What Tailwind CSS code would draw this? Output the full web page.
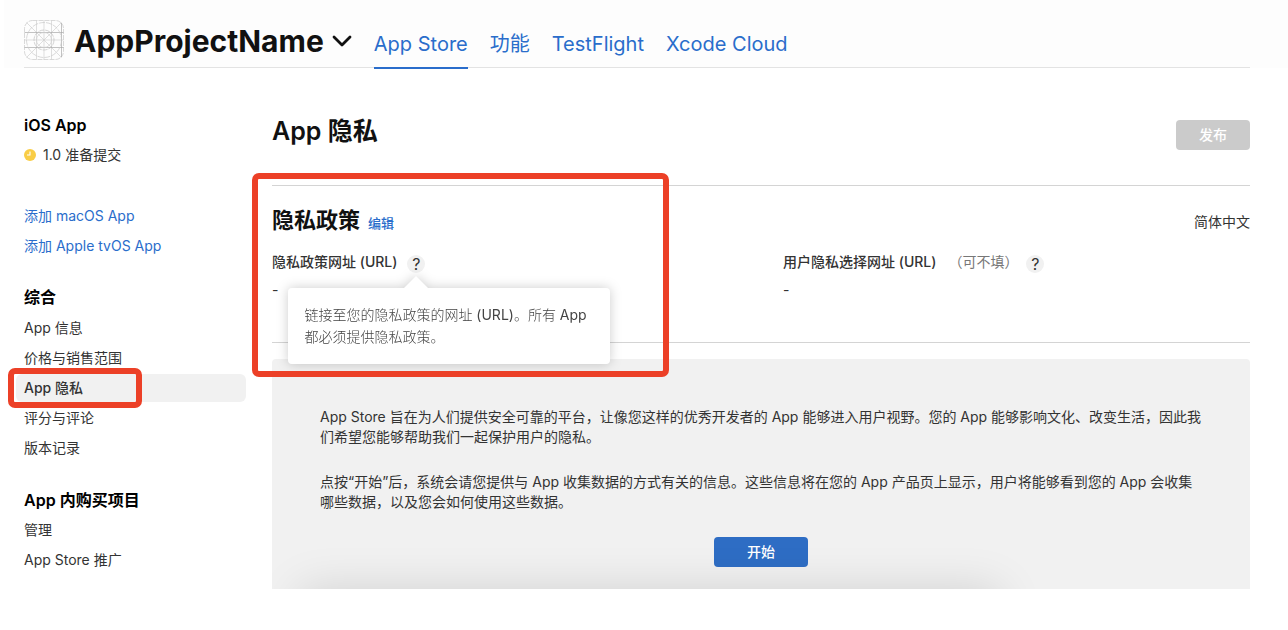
<!DOCTYPE html>
<html lang="zh-CN">
<head>
<meta charset="utf-8">
<title>App 隐私</title>
<script src="https://cdn.jsdelivr.net/npm/@tailwindcss/browser@4"></script>
</head>
<body class="bg-white font-['Inter','Noto_Sans_CJK_SC',sans-serif] text-sm text-[#333]">
<header class="ml-1 h-[68px] bg-[#fdfdfd] pl-5 pr-[38px]">
  <div class="flex h-full items-stretch border-b border-[#e3e3e3]">
    <div class="flex items-center pt-3">
      <svg class="size-10 shrink-0" viewBox="0 0 40 40" fill="none" stroke="#c0c0c0" stroke-width="0.7" aria-hidden="true">
        <rect x="0.5" y="0.5" width="39" height="39" rx="8" stroke="#c8c8c8" stroke-dasharray="5 1"/>
        <path d="M2.5 2.5l35 35M37.5 2.5l-35 35M12.5 0.5v39M20 0.5v39M27.5 0.5v39M0.5 20h39" stroke="#d0d0d0"/>
        <path d="M37.5 3v34M0.5 12.5h39M0.5 27.5h39" stroke="#a8a8a8"/>
        <circle cx="20" cy="20" r="17.5" stroke="#c8c8c8" stroke-dasharray="6 1"/>
        <circle cx="20" cy="20" r="10" stroke-dasharray="5 1"/>
        <circle cx="20" cy="20" r="7.5" stroke="#d0d0d0"/>
      </svg>
      <button type="button" class="ml-[10px] flex items-center gap-2 pt-0.5 text-[#111]">
        <span class="text-3xl leading-10 font-bold">AppProjectName</span>
        <svg class="h-3 w-5" viewBox="0 0 20 12" fill="none" stroke="#111" stroke-width="2.8" stroke-linecap="round" stroke-linejoin="round" aria-hidden="true"><path d="M2 2l8 8 8-8"/></svg>
      </button>
    </div>
    <nav class="-mb-0.5 ml-[22px] flex gap-[22px] text-xl text-[#2a6dcb]">
      <a href="#" class="flex items-center border-b-2 border-[#2a6dcb] pt-5">App Store</a>
      <a href="#" class="flex items-center pt-[18px]">功能</a>
      <a href="#" class="flex items-center pt-[18px]">TestFlight</a>
      <a href="#" class="flex items-center pt-[18px]">Xcode Cloud</a>
    </nav>
  </div>
</header>

<div class="flex gap-[26px] pl-4 pr-[38px]">
  <aside class="w-[230px] shrink-0 pt-[42px] leading-7">
    <section>
      <h2 class="px-2 text-base leading-[30px] font-semibold text-black">iOS App</h2>
      <a href="#" class="flex items-center gap-[7px] px-2 pt-px">
        <svg class="size-3" viewBox="0 0 12 12" aria-hidden="true"><circle cx="6" cy="6" r="6" fill="#f9cd46"/><path d="M6 2.5V6H3" fill="none" stroke="#fff" stroke-width="1.1"/></svg>
        1.0 准备提交
      </a>
    </section>
    <ul class="mt-[33px] flex flex-col gap-0.5 text-[#2a6dcb]">
      <li><a href="#" class="block px-2">添加 macOS App</a></li>
      <li><a href="#" class="block px-2">添加 Apple tvOS App</a></li>
    </ul>
    <section class="mt-[22px]">
      <h2 class="px-2 text-base leading-[30px] font-semibold text-black">综合</h2>
      <ul class="mt-0.5 flex flex-col gap-0.5">
        <li><a href="#" class="block px-2">App 信息</a></li>
        <li><a href="#" class="block px-2">价格与销售范围</a></li>
        <li class="relative">
          <a href="#" class="block rounded-md bg-[#f1f1f1] px-2 font-medium">App 隐私</a>
          <div class="pointer-events-none absolute -top-[6px] -left-2 h-10 w-[134px] rounded-[7px] border-6 border-[#ec4027]"></div>
        </li>
        <li><a href="#" class="block px-2">评分与评论</a></li>
        <li><a href="#" class="block px-2">版本记录</a></li>
      </ul>
    </section>
    <section class="mt-[23px]">
      <h2 class="px-2 text-base leading-[30px] font-semibold text-black">App 内购买项目</h2>
      <ul class="mt-px flex flex-col gap-0.5">
        <li><a href="#" class="block px-2">管理</a></li>
        <li><a href="#" class="block px-2">App Store 推广</a></li>
      </ul>
    </section>
  </aside>

  <main class="min-w-0 flex-1">
    <div class="flex items-start justify-between pt-[42px] pb-[33px]">
      <h1 class="text-[25px] leading-[42px] font-semibold text-[#111]">App 隐私</h1>
      <button type="button" disabled class="mt-[10px] h-[30px] w-[74px] rounded bg-[#cbcbcb] text-sm font-medium text-white">发布</button>
    </div>

    <section class="relative h-[158px] border-y border-[#d4d4d4] pt-[18px]">
      <div class="flex items-center justify-between">
        <div class="flex items-baseline gap-2">
          <h2 class="text-[22px] leading-8 font-semibold text-[#111]">隐私政策</h2>
          <button type="button" class="text-[13px] font-medium text-[#2a6dcb]">编辑</button>
        </div>
        <span class="pt-1">简体中文</span>
      </div>
      <dl class="mt-3 grid grid-cols-2 gap-x-11">
        <div>
          <dt class="flex items-center font-medium">
            <span class="leading-7">隐私政策网址 (URL)</span>
            <span class="relative ml-[10px] mt-1">
              <button type="button" aria-describedby="policy-tip" class="block size-[18px] rounded-full bg-[#f1f1f1] text-base leading-[18px] font-normal">?</button>
              <span id="policy-tip" role="tooltip" class="absolute top-[33px] -left-[119px] z-10 w-[322px] rounded bg-white p-4 leading-[22px] font-extralight text-[#444] drop-shadow-[0_0_6px_rgba(0,0,0,0.2)]">
                <svg class="absolute -top-3 left-[116px] h-3 w-6" viewBox="0 0 24 12" aria-hidden="true"><path d="M0 12L12 0l12 12z" fill="#fff"/></svg>
                链接至您的隐私政策的网址 <span class="font-normal">(URL)</span>。所有 <span class="font-normal">App</span> 都必须提供隐私政策。
              </span>
            </span>
          </dt>
          <dd class="leading-7">-</dd>
        </div>
        <div>
          <dt class="flex items-center font-medium">
            <span class="leading-7">用户隐私选择网址 (URL)</span>
            <span class="ml-3 font-normal text-[#777]">（可不填）</span>
            <button type="button" class="mt-1 ml-2 size-[18px] rounded-full bg-[#f1f1f1] text-base leading-[18px] font-normal">?</button>
          </dt>
          <dd class="leading-7">-</dd>
        </div>
      </dl>
      <div class="pointer-events-none absolute -top-[13px] -left-5 z-20 h-[204px] w-[417px] rounded-[7px] border-6 border-[#ec4027]"></div>
    </section>

    <section class="relative mt-4 overflow-hidden rounded-t bg-[#f1f1f1] px-12 pt-12 pb-[22px]">
      <p class="leading-5">App Store 旨在为人们提供安全可靠的平台，让像您这样的优秀开发者的 App 能够进入用户视野。您的 App 能够影响文化、改变生活，因此我们希望您能够帮助我们一起保护用户的隐私。</p>
      <p class="mt-[25px] leading-5">点按“开始”后，系统会请您提供与 App 收集数据的方式有关的信息。这些信息将在您的 App 产品页上显示，用户将能够看到您的 App 会收集哪些数据，以及您会如何使用这些数据。</p>
      <button type="button" class="mx-auto mt-[25px] block h-[30px] w-[94px] rounded bg-[#2e6dc4] text-sm font-medium text-white">开始</button>
      <div class="pointer-events-none absolute top-full left-7 h-20 w-[700px] shadow-[0_0_46px_rgba(0,0,0,0.13)]"></div>
    </section>
  </main>
</div>
</body>
</html>
